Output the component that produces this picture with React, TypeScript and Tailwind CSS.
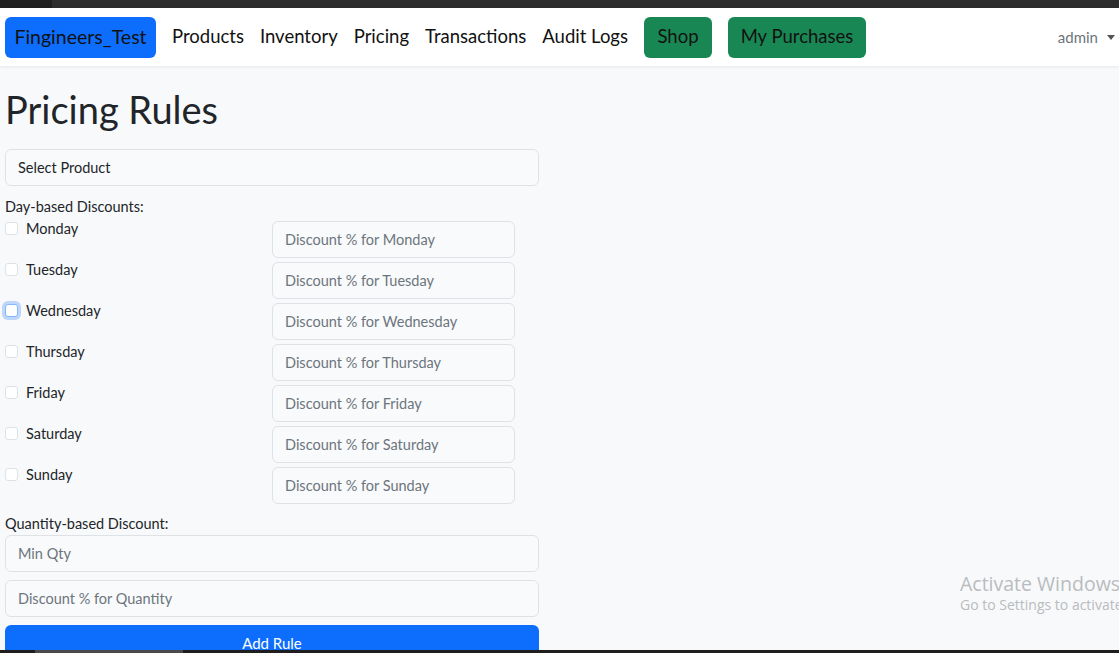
const days = ["Monday", "Tuesday", "Wednesday", "Thursday", "Friday", "Saturday", "Sunday"];

function NavLink({ label }: { label: string }) {
  return <a className="text-[18.5px] text-[#111] px-2">{label}</a>;
}

function TextInput({ placeholder, className = "" }: { placeholder: string; className?: string }) {
  return (
    <div
      className={`h-[37px] flex items-center px-3 border border-[#dee2e6] rounded-[6px] bg-[#f9fafb] text-[14.5px] text-[#6c757d] ${className}`}
    >
      {placeholder}
    </div>
  );
}

export default function App() {
  return (
    <div
      className="h-[653px] w-[1119px] flex flex-col overflow-hidden bg-[#f8f9fa] text-[#212529]"
      style={{ fontFamily: "Lato, 'Noto Sans', sans-serif" }}
    >
      <div className="h-2 flex shrink-0 bg-[#2b2b2b]">
        <div className="w-[52px] bg-[#202020]" />
        <div className="flex-1 bg-[#2d2d2d]" />
      </div>

      <nav className="h-[58px] shrink-0 bg-white shadow-[0_1px_3px_rgba(0,0,0,0.08)] flex items-center pl-[5px] pr-[4px] relative z-10">
        <div className="h-[41px] w-[151px] rounded-[6px] bg-[#0d6efd] flex items-center justify-center text-[19.5px] text-[#111]">
          Fingineers_Test
        </div>
        <div className="flex items-center ml-[8px]">
          <NavLink label="Products" />
          <NavLink label="Inventory" />
          <NavLink label="Pricing" />
          <NavLink label="Transactions" />
          <NavLink label="Audit Logs" />
        </div>
        <div className="h-[41px] w-[68px] ml-[8px] rounded-[6px] bg-[#198754] flex items-center justify-center text-[18.5px] text-[#111]">
          Shop
        </div>
        <div className="h-[41px] w-[138px] ml-[16px] rounded-[6px] bg-[#198754] flex items-center justify-center text-[18.5px] text-[#111]">
          My Purchases
        </div>
        <div className="ml-auto flex items-center gap-[9px] text-[15px] text-[#6c757d]">
          admin
          <span className="w-0 h-0 border-l-[4px] border-r-[4px] border-t-[5px] border-l-transparent border-r-transparent border-t-[#555]" />
        </div>
      </nav>

      <main className="flex-1 relative overflow-hidden pl-[5px]">
        <h1 className="text-[38px] leading-none mt-[24px] mb-[21px] text-[#212529]">Pricing Rules</h1>
        <div className="w-[534px]">
          <div className="h-[37px] flex items-center px-3 border border-[#dee2e6] rounded-[6px] bg-[#f9fafb] text-[14.5px] text-[#212529]">
            Select Product
          </div>
          <div className="text-[14.5px] mt-[11px] leading-[20px]">Day-based Discounts:</div>
          <div className="flex flex-col gap-[4px] mt-[4px]">
            {days.map((d) => (
              <div key={d} className="flex h-[37px]">
                <div className="w-[267px] flex items-start gap-[8px] text-[14.5px]">
                  <span
                    className={`mt-[1px] w-[13px] h-[13px] rounded-[3px] border bg-white ${
                      d === "Wednesday"
                        ? "border-[#86b7fe] shadow-[0_0_0_3px_rgba(13,110,253,0.25)]"
                        : "border-[#dee2e6]"
                    }`}
                  />
                  <span className="leading-[16px]">{d}</span>
                </div>
                <TextInput placeholder={`Discount % for ${d}`} className="w-[243px]" />
              </div>
            ))}
          </div>
          <div className="text-[14.5px] mt-[10px] leading-[20px]">Quantity-based Discount:</div>
          <TextInput placeholder="Min Qty" className="mt-[1px]" />
          <TextInput placeholder="Discount % for Quantity" className="mt-[8px]" />
          <div className="mt-[8px] h-[37px] rounded-[6px] bg-[#0d6efd] text-white text-[15px] flex items-center justify-center">
            Add Rule
          </div>
        </div>

        <div
          className="absolute left-[960px] top-[506px] text-[#b9bcc0] leading-tight whitespace-nowrap"
          style={{ fontFamily: "'Open Sans', sans-serif" }}
        >
          <div className="text-[19.5px]">Activate Windows</div>
          <div className="text-[14px]">Go to Settings to activate Windows.</div>
        </div>
      </main>

      <div className="h-[3px] shrink-0 flex bg-[#1e1e1e]">
        <div className="w-[35px]" />
        <div className="w-[148px] bg-[#4a4a4a]" />
      </div>
    </div>
  );
}
